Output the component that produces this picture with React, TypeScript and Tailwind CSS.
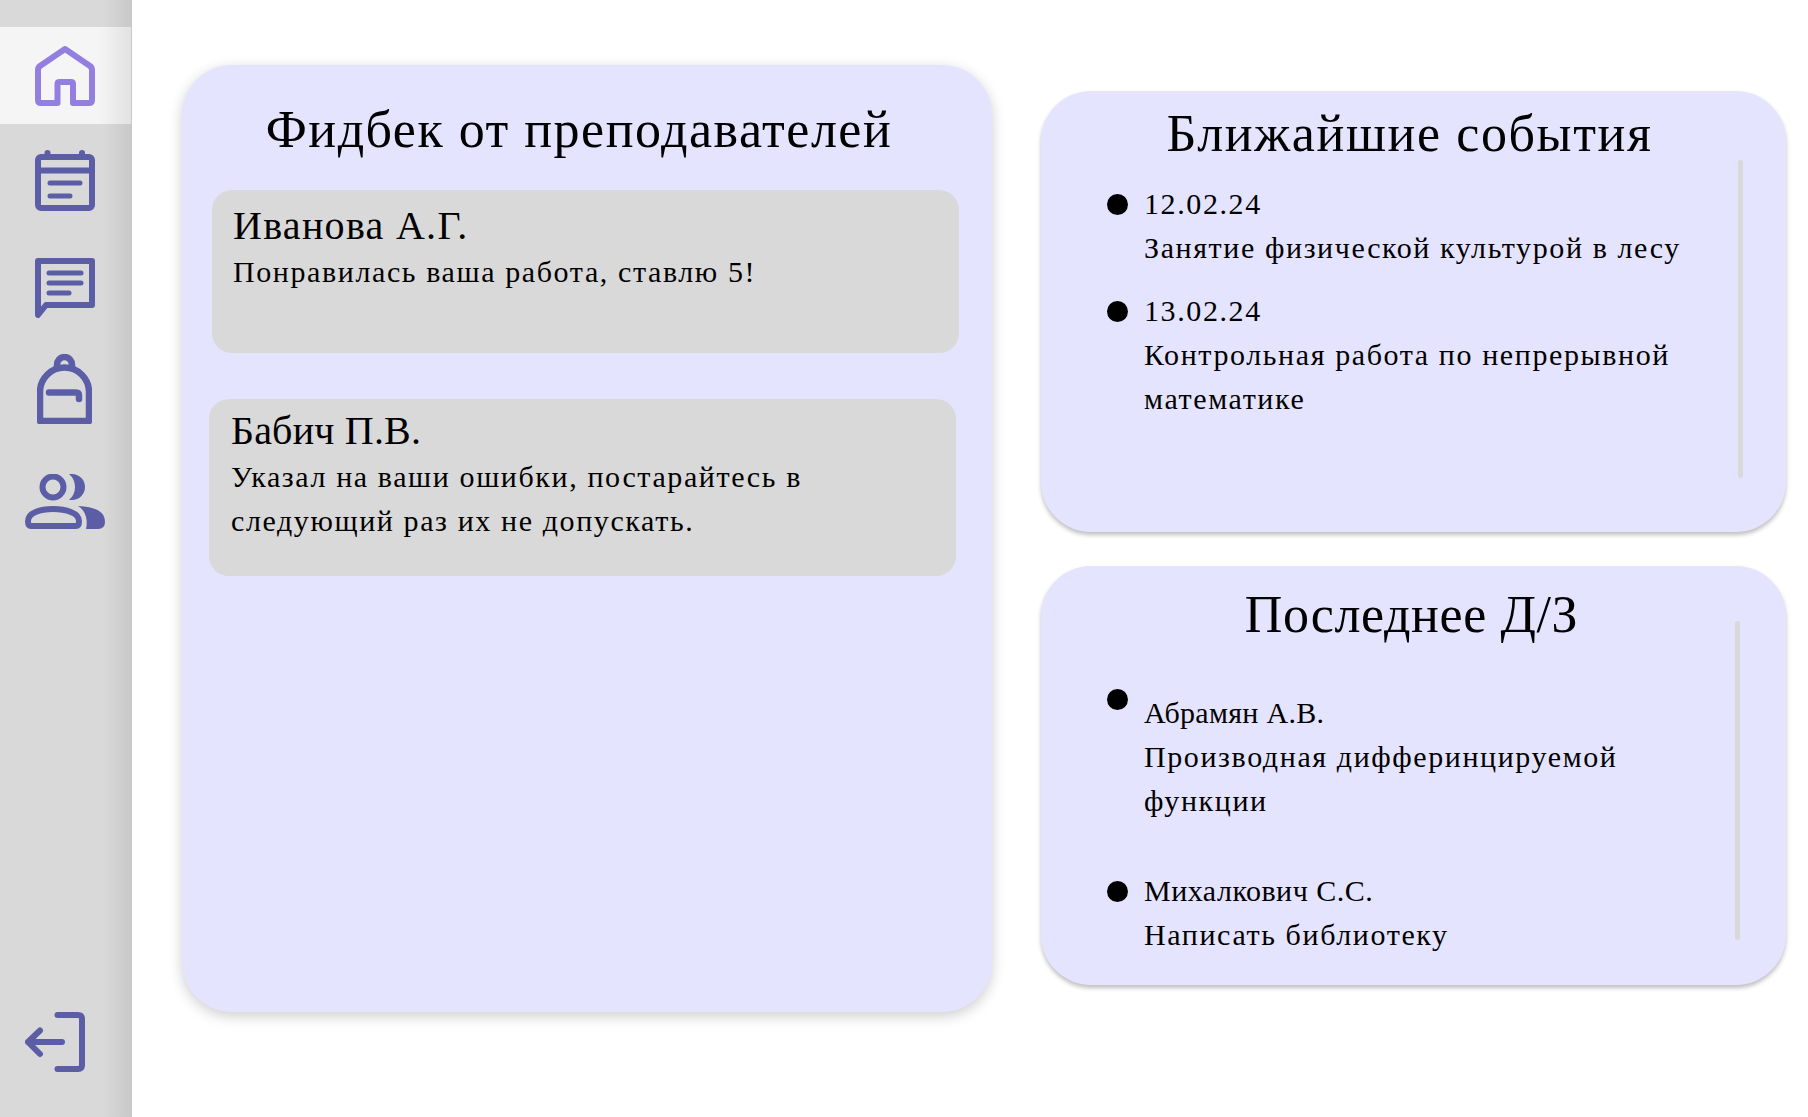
const serif = "font-['Liberation_Serif',serif]";

function Sidebar() {
  return (
    <aside className="flex h-[1117px] w-[132px] shrink-0 flex-col bg-[linear-gradient(90deg,#d9d9d9_78%,#c8c8c8_100%)]">
      {/* Active item */}
      <div className="mt-[27px] flex h-[97px] w-[131px] items-center justify-center pr-px bg-[linear-gradient(90deg,#f5f5f5_75%,#e2e2e2_100%)]">
        <svg width="60" height="60" viewBox="0 0 60 60" fill="none" stroke="#937fe0" strokeWidth="6" strokeLinejoin="round">
          <path d="M30 3 L5 20 Q3 21.5 3 24 V54 Q3 57 6 57 H22.5 V38 Q22.5 36 24.5 36 H36 Q38 36 38 38 V57 H54 Q57 57 57 54 V24 Q57 21.5 55 20 Z" />
        </svg>
      </div>

      <div className="mt-[26px] flex w-[130px] justify-center">
        <svg width="60" height="61" viewBox="0 0 60 61" fill="none" stroke="#5b5ea6" strokeWidth="6" strokeLinecap="round" strokeLinejoin="round">
          <rect x="3" y="7" width="54" height="51" rx="3" />
          <path d="M3 20.5 H57 M12.5 3 V7 M47 3 V7" />
          <path d="M15 33 H45 M15 46 H35" strokeWidth="5" />
        </svg>
      </div>

      <div className="mt-[47px] flex w-[130px] justify-center">
        <svg width="60" height="60" viewBox="0 0 60 60" fill="none" stroke="#5b5ea6" strokeWidth="6" strokeLinecap="round" strokeLinejoin="round">
          <path d="M3 3 H57 V47 H11 L3 57 Z" />
          <path d="M14 15 H46 M14 25 H46 M14 35 H34" strokeWidth="5" />
        </svg>
      </div>

      <div className="mt-[36px] flex w-[128px] justify-center">
        <svg width="55" height="70" viewBox="0 0 55 70" fill="none" stroke="#5b5ea6" strokeWidth="6.5" strokeLinecap="round" strokeLinejoin="round">
          <path d="M3 67 V38 A24.5 24.5 0 0 1 52 38 V67 Z" />
          <path d="M20 13 V11 A7.5 8 0 0 1 35 11 V13" />
          <path d="M12 38.5 H39 Q42 38.5 42 41.5 V45" />
        </svg>
      </div>

      <div className="mt-[50px] flex w-[130px] justify-center">
        <svg width="80" height="55" viewBox="0 0 80 55" fill="none">
          <circle cx="28" cy="13" r="10.5" stroke="#5b5ea6" strokeWidth="6" />
          <path d="M6 52 Q3 52 3 47 C3 39 15 35 28 35 C41 35 54 39 54 47 Q54 52 51 52 Z" stroke="#5b5ea6" strokeWidth="6" strokeLinejoin="round" />
          <path d="M44 0 H47 A13 13 0 0 1 47 26 H44 A17 17 0 0 0 44 0 Z" fill="#5b5ea6" />
          <path d="M53 32 C70 33 80 37 80 48 Q80 55 73 55 H61 C63 46 61 37 53 32 Z" fill="#5b5ea6" />
        </svg>
      </div>

      <div className="mb-[45px] ml-[25px] mt-auto">
        <svg width="60" height="60" viewBox="0 0 60 60" fill="none" stroke="#5b5ea6" strokeWidth="6" strokeLinecap="round" strokeLinejoin="round">
          <path d="M32.5 3 H53 Q57 3 57 7 V53 Q57 57 53 57 H32.5" />
          <path d="M37 30 H3 M15 18.5 L3 30 L15 42" />
        </svg>
      </div>
    </aside>
  );
}

function FeedbackCard({ name, text, className, nameClass }: { name: string; text: string; className: string; nameClass: string }) {
  return (
    <div className={`w-[747px] rounded-[20px] bg-[#d9d9d9] pr-[90px] ${className}`}>
      <div className={`text-[40px] text-black ${nameClass}`}>{name}</div>
      <p className="text-[30px] leading-[44px] tracking-[1.6px] text-black">{text}</p>
    </div>
  );
}

function EventItem({ head, body, className = "", headClass = "tracking-[1.6px]" }: { head: string; body: string; className?: string; headClass?: string }) {
  return (
    <li className={`relative pl-[103px] text-[30px] leading-[44px] tracking-[1.6px] text-black ${className}`}>
      <span className="absolute left-[66px] top-[12px] h-[21px] w-[21px] rounded-full bg-black" />
      <div className={headClass}>{head}</div>
      <div>{body}</div>
    </li>
  );
}

const heading = "text-center text-[52px] leading-[70px] text-black";

export default function App() {
  return (
    <div className={`flex min-h-[1117px] bg-white ${serif}`}>
      <Sidebar />

      {/* Feedback column */}
      <section className="ml-[50px] mt-[65px] h-[947px] w-[810px] rounded-[50px] bg-[#e5e4ff] pt-[30px] shadow-[0_4px_14px_rgba(0,0,0,0.2)]">
        <h1 className={`${heading} pr-[16px] tracking-[1.5px]`}>Фидбек от преподавателей</h1>
        <FeedbackCard
          className="ml-[30px] mt-[25px] h-[163px] pl-[21px] pt-[11px]"
          nameClass="leading-[49px] tracking-[1.3px]"
          name="Иванова А.Г."
          text="Понравилась ваша работа, ставлю 5!"
        />
        <FeedbackCard
          className="ml-[27px] mt-[46px] h-[177px] pl-[22px] pt-[8px]"
          nameClass="leading-[48px] tracking-[0.2px]"
          name="Бабич П.В."
          text="Указал на ваши ошибки, постарайтесь в следующий раз их не допускать."
        />
      </section>

      {/* Right column */}
      <div className="ml-[49px] mt-[91px] flex w-[745px] flex-col gap-[34px]">
        <section className="relative h-[441px] rounded-[50px] bg-[#e5e4ff] pt-[8px] shadow-[0_3px_4px_rgba(0,0,0,0.25)]">
          <h2 className={`${heading} pr-[8px] tracking-[1.6px]`}>Ближайшие события</h2>
          <ul className="mt-[13px] w-[680px] space-y-[19px]">
            <EventItem head="12.02.24" body="Занятие физической культурой в лесу" />
            <EventItem head="13.02.24" body="Контрольная работа по непрерывной математике" />
          </ul>
          <div className="absolute left-[697px] top-[69px] h-[318px] w-[5px] rounded-full bg-[#d9d9d9]" />
        </section>

        <section className="relative h-[419px] rounded-[50px] bg-[#e5e4ff] pt-[14px] shadow-[0_3px_4px_rgba(0,0,0,0.25)]">
          <h2 className={`${heading} pr-[4px] tracking-[0.6px]`}>Последнее Д/З</h2>
          <ul className="mt-[41px] w-[630px]">
            <EventItem className="[&>span]:top-[-2px]" headClass="tracking-[0.3px]" head="Абрамян А.В." body="Производная дифферинцируемой функции" />
            <EventItem className="mt-[46px]" headClass="tracking-[0.5px]" head="Михалкович С.С." body="Написать библиотеку" />
          </ul>
          <div className="absolute left-[694px] top-[55px] h-[319px] w-[5px] rounded-full bg-[#d9d9d9]" />
        </section>
      </div>
    </div>
  );
}
